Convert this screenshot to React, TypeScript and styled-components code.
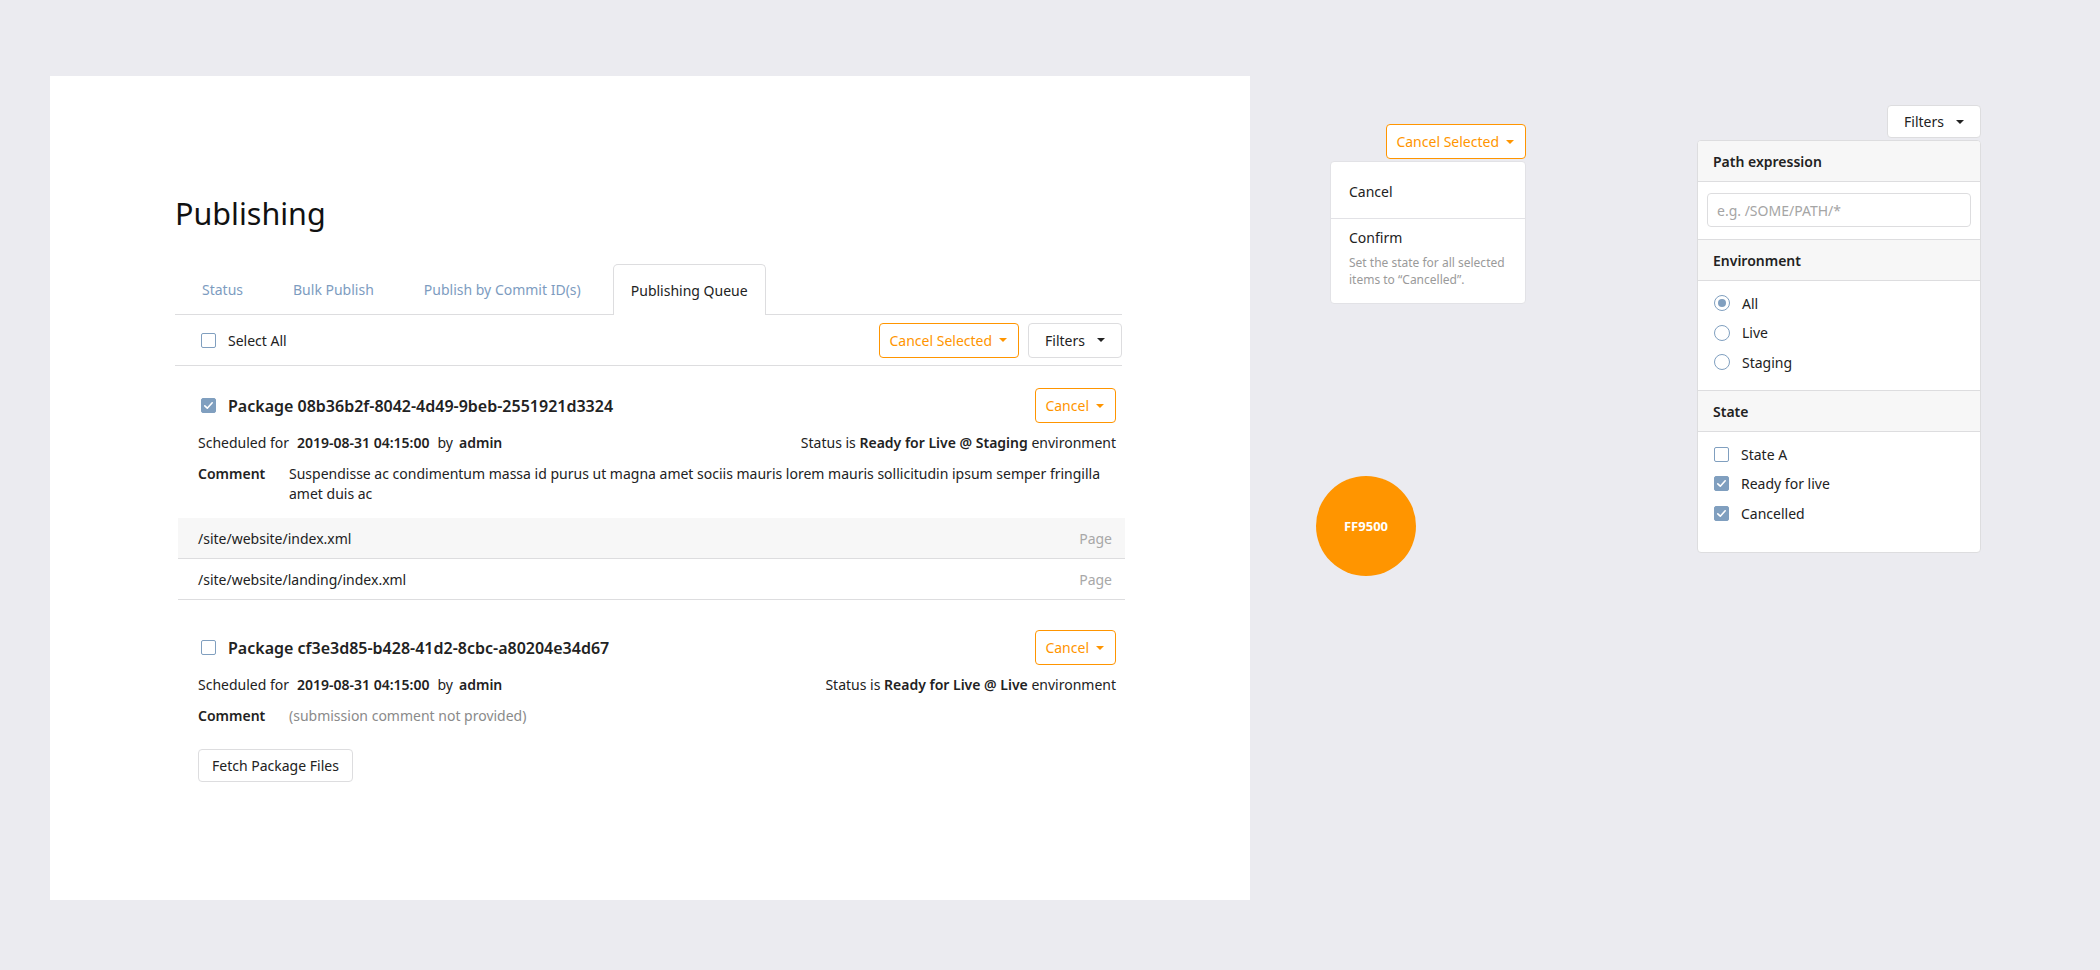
import React from "react";
import styled, { createGlobalStyle, css } from "styled-components";

const ORANGE = "#FF9500";
const SLATE = "#809fbf";
const LINE = "#dddddf";
const TEXT = "#222222";

const Global = createGlobalStyle`
  html, body { margin: 0; padding: 0; background: #ebebf0; }
  body { font-family: "Noto Sans", "Open Sans", sans-serif; color: ${TEXT}; }
  * { box-sizing: border-box; }
`;

const Canvas = styled.div`
  width: 2100px;
  height: 970px;
  overflow: hidden;
  display: flex;
  align-items: flex-start;
`;

const Artboard = styled.main`
  margin: 76px 0 0 50px;
  width: 1200px;
  height: 824px;
  background: #fff;
  padding: 117px 128px 0 125px;
  flex-shrink: 0;
`;

const Title = styled.h1`
  margin: 0;
  font-size: 30.5px;
  line-height: 40px;
  font-weight: 400;
  color: #111;
`;

const TabBar = styled.nav`
  margin-top: 31px;
  display: flex;
  height: 51px;
  border-bottom: 1px solid ${LINE};
  padding-left: 9px;
  gap: 14px;
`;

const Tab = styled.div<{ $active?: boolean }>`
  display: flex;
  align-items: center;
  padding: 0 ${(p) => (p.$active ? 17 : 18)}px;
  font-size: 14px;
  color: #7d9cbf;
  ${(p) =>
    p.$active &&
    css`
      color: ${TEXT};
      background: #fff;
      border: 1px solid ${LINE};
      border-bottom: none;
      border-radius: 5px 5px 0 0;
      height: 51px;
      margin-bottom: -1px;
    `}
`;

const Toolbar = styled.div`
  display: flex;
  align-items: center;
  height: 51px;
  border-bottom: 1px solid ${LINE};
  padding-left: 26px;
  font-size: 14px;
`;

const Spacer = styled.div`
  flex: 1;
`;

const ButtonGroup = styled.div`
  display: flex;
  gap: 9px;
`;

const Box = styled.span<{ $checked?: boolean }>`
  width: 15px;
  height: 15px;
  flex-shrink: 0;
  border-radius: 2px;
  border: 1.5px solid ${SLATE};
  background: ${(p) => (p.$checked ? SLATE : "#fff")};
  display: inline-flex;
  align-items: center;
  justify-content: center;
`;

const Checkbox = ({ checked }: { checked?: boolean }) => (
  <Box $checked={checked}>
    {checked && (
      <svg width="11" height="11" viewBox="0 0 11 11">
        <polyline points="1.8,5.8 4.3,8.2 9.2,2.8" fill="none" stroke="#fff" strokeWidth="1.6" strokeLinecap="round" strokeLinejoin="round" />
      </svg>
    )}
  </Box>
);

const Label = styled.span<{ $gap?: number }>`
  margin-left: ${(p) => p.$gap ?? 12}px;
  font-size: 14px;
`;

const Btn = styled.button<{ $variant?: "orange" | "plain" | "filter"; $h?: number }>`
  display: inline-flex;
  align-items: center;
  height: ${(p) => p.$h ?? 35}px;
  border-radius: 4px;
  font-family: inherit;
  font-size: 14px;
  background: #fff;
  cursor: pointer;
  ${(p) =>
    p.$variant === "orange"
      ? css`
          color: ${ORANGE};
          border: 1px solid ${ORANGE};
          padding: 0 11px 0 9px;
          gap: 7px;
        `
      : p.$variant === "filter"
      ? css`
          color: ${TEXT};
          border: 1px solid ${LINE};
          padding: 0 16px;
          gap: 12px;
        `
      : css`
          color: ${TEXT};
          border: 1px solid ${LINE};
          padding: 0 13px;
        `}
`;

const Caret = ({ color }: { color: string }) => (
  <svg width="8" height="4" viewBox="0 0 8 4">
    <path d="M0 0 L8 0 L4 4 Z" fill={color} />
  </svg>
);

const Package = styled.section<{ $top: number }>`
  padding: ${(p) => p.$top}px 6px 0 23px;
`;

const PkgHeader = styled.div`
  display: flex;
  align-items: center;
  height: 35px;
  padding-left: 3px;
`;

const PkgTitle = styled.span`
  margin-left: 12px;
  font-size: 16px;
  font-weight: 600;
`;

const Meta = styled.div`
  margin-top: 10px;
  display: flex;
  justify-content: space-between;
  font-size: 14px;
  line-height: 20px;
`;

const Strong = styled.b<{ $mx?: number }>`
  font-weight: 600;
  margin: 0 ${(p) => p.$mx ?? 0}px;
`;

const CommentRow = styled.div`
  margin-top: 11px;
  display: flex;
  font-size: 14px;
  line-height: 19.5px;
`;

const CommentLabel = styled.span`
  width: 91px;
  flex-shrink: 0;
  font-weight: 600;
`;

const CommentText = styled.span<{ $muted?: boolean }>`
  color: ${(p) => (p.$muted ? "#8a8a8a" : TEXT)};
`;

const FileList = styled.div`
  margin: 15px -9px 0 -20px;
`;

const FileRow = styled.div<{ $shade?: boolean }>`
  display: flex;
  align-items: center;
  justify-content: space-between;
  height: 41px;
  padding: 0 13px 0 20px;
  border-bottom: 1px solid ${LINE};
  background: ${(p) => (p.$shade ? "#f7f7f7" : "#fff")};
  font-size: 14px;
`;

const FileType = styled.span`
  color: #a8a8a8;
`;

const FetchWrap = styled.div`
  margin-top: 23px;
`;

/* right side demos */

const DemoColumn = styled.div<{ $ml: number; $mt: number; $w: number }>`
  display: flex;
  flex-direction: column;
  flex-shrink: 0;
  margin: ${(p) => p.$mt}px 0 0 ${(p) => p.$ml}px;
  width: ${(p) => p.$w}px;
`;

const RightAligned = styled.div`
  align-self: flex-end;
`;

const Menu = styled.div`
  margin: 2px 0 0 14px;
  background: #fff;
  border: 1px solid #e2e2e6;
  border-radius: 4px;
  overflow: hidden;
`;

const MenuItem = styled.div`
  display: flex;
  align-items: center;
  height: 57px;
  padding: 2px 18px 0;
  font-size: 14px;
  border-bottom: 1px solid #e2e2e6;
`;

const MenuConfirm = styled.div`
  padding: 9px 18px 15px;
  font-size: 14px;
  line-height: 20px;
`;

const MenuDesc = styled.div`
  margin-top: 7px;
  font-size: 12px;
  line-height: 16.5px;
  color: #9a9a9a;
`;

const Swatch = styled.div`
  margin-top: 172px;
  width: 100px;
  height: 100px;
  border-radius: 50%;
  background: ${ORANGE};
  color: #fff;
  font-size: 13px;
  font-weight: 700;
  display: flex;
  align-items: center;
  justify-content: center;
`;

const FilterPanel = styled.div`
  margin-top: 2px;
  background: #fff;
  border: 1px solid ${LINE};
  border-radius: 4px;
  overflow: hidden;
`;

const SectionHead = styled.div`
  height: 41px;
  display: flex;
  align-items: center;
  padding: 0 15px;
  background: #f7f7f7;
  border-bottom: 1px solid ${LINE};
  font-size: 14px;
  font-weight: 600;
`;

const InputSection = styled.div`
  padding: 11px 9px 12px;
  border-bottom: 1px solid ${LINE};
`;

const PathInput = styled.input`
  width: 100%;
  height: 34px;
  border: 1px solid ${LINE};
  border-radius: 4px;
  padding: 0 9px;
  font-family: inherit;
  font-size: 14px;
  color: ${TEXT};
  &::placeholder {
    color: #a5a5a5;
  }
`;

const OptionList = styled.div<{ $last?: boolean }>`
  padding: 7.5px 15px ${(p) => (p.$last ? 24 : 13)}px 16px;
  ${(p) => !p.$last && css`border-bottom: 1px solid ${LINE};`}
`;

const Option = styled.div`
  display: flex;
  align-items: center;
  height: 29.5px;
  font-size: 14px;
`;

const RadioCircle = styled.span<{ $on?: boolean }>`
  width: 16px;
  height: 16px;
  border-radius: 50%;
  border: 1.5px solid ${SLATE};
  display: inline-flex;
  align-items: center;
  justify-content: center;
  flex-shrink: 0;
  &::after {
    content: "";
    width: 8px;
    height: 8px;
    border-radius: 50%;
    background: ${(p) => (p.$on ? SLATE : "transparent")};
  }
`;

const tabs = ["Status", "Bulk Publish", "Publish by Commit ID(s)", "Publishing Queue"];

export default function App() {
  return (
    <>
      <Global />
      <Canvas>
        <Artboard>
          <Title>Publishing</Title>
          <TabBar>
            {tabs.map((t, i) => (
              <Tab key={t} $active={i === 3}>
                {t}
              </Tab>
            ))}
          </TabBar>
          <Toolbar>
            <Checkbox />
            <Label>Select All</Label>
            <Spacer />
            <ButtonGroup>
              <Btn $variant="orange">
                Cancel Selected <Caret color={ORANGE} />
              </Btn>
              <Btn $variant="filter">
                Filters <Caret color={TEXT} />
              </Btn>
            </ButtonGroup>
          </Toolbar>

          <Package $top={22}>
            <PkgHeader>
              <Checkbox checked />
              <PkgTitle>Package 08b36b2f-8042-4d49-9beb-2551921d3324</PkgTitle>
              <Spacer />
              <Btn $variant="orange">
                Cancel <Caret color={ORANGE} />
              </Btn>
            </PkgHeader>
            <Meta>
              <span>
                Scheduled for<Strong $mx={8}>2019-08-31 04:15:00</Strong>by<Strong $mx={6}>admin</Strong>
              </span>
              <span>
                Status is <Strong>Ready for Live @ Staging</Strong> environment
              </span>
            </Meta>
            <CommentRow>
              <CommentLabel>Comment</CommentLabel>
              <CommentText>
                Suspendisse ac condimentum massa id purus ut magna amet sociis mauris lorem mauris sollicitudin ipsum semper fringilla amet duis ac
              </CommentText>
            </CommentRow>
            <FileList>
              <FileRow $shade>
                <span>/site/website/index.xml</span>
                <FileType>Page</FileType>
              </FileRow>
              <FileRow>
                <span>/site/website/landing/index.xml</span>
                <FileType>Page</FileType>
              </FileRow>
            </FileList>
          </Package>

          <Package $top={30}>
            <PkgHeader>
              <Checkbox />
              <PkgTitle>Package cf3e3d85-b428-41d2-8cbc-a80204e34d67</PkgTitle>
              <Spacer />
              <Btn $variant="orange">
                Cancel <Caret color={ORANGE} />
              </Btn>
            </PkgHeader>
            <Meta>
              <span>
                Scheduled for<Strong $mx={8}>2019-08-31 04:15:00</Strong>by<Strong $mx={6}>admin</Strong>
              </span>
              <span>
                Status is <Strong>Ready for Live @ Live</Strong> environment
              </span>
            </Meta>
            <CommentRow>
              <CommentLabel>Comment</CommentLabel>
              <CommentText $muted>(submission comment not provided)</CommentText>
            </CommentRow>
            <FetchWrap>
              <Btn $variant="plain" $h={33}>
                Fetch Package Files
              </Btn>
            </FetchWrap>
          </Package>
        </Artboard>

        <DemoColumn $ml={66} $mt={124} $w={210}>
          <RightAligned>
            <Btn $variant="orange">
              Cancel Selected <Caret color={ORANGE} />
            </Btn>
          </RightAligned>
          <Menu>
            <MenuItem>Cancel</MenuItem>
            <MenuConfirm>
              Confirm
              <MenuDesc>
                Set the state for all selected items to “Cancelled”.
              </MenuDesc>
            </MenuConfirm>
          </Menu>
          <Swatch>FF9500</Swatch>
        </DemoColumn>

        <DemoColumn $ml={171} $mt={105} $w={284}>
          <RightAligned>
            <Btn $variant="filter" $h={33}>
              Filters <Caret color={TEXT} />
            </Btn>
          </RightAligned>
          <FilterPanel>
            <SectionHead>Path expression</SectionHead>
            <InputSection>
              <PathInput placeholder="e.g. /SOME/PATH/*" />
            </InputSection>
            <SectionHead>Environment</SectionHead>
            <OptionList>
              <Option>
                <RadioCircle $on />
                <Label>All</Label>
              </Option>
              <Option>
                <RadioCircle />
                <Label>Live</Label>
              </Option>
              <Option>
                <RadioCircle />
                <Label>Staging</Label>
              </Option>
            </OptionList>
            <SectionHead>State</SectionHead>
            <OptionList $last>
              <Option>
                <Checkbox />
                <Label>State A</Label>
              </Option>
              <Option>
                <Checkbox checked />
                <Label>Ready for live</Label>
              </Option>
              <Option>
                <Checkbox checked />
                <Label>Cancelled</Label>
              </Option>
            </OptionList>
          </FilterPanel>
        </DemoColumn>
      </Canvas>
    </>
  );
}
